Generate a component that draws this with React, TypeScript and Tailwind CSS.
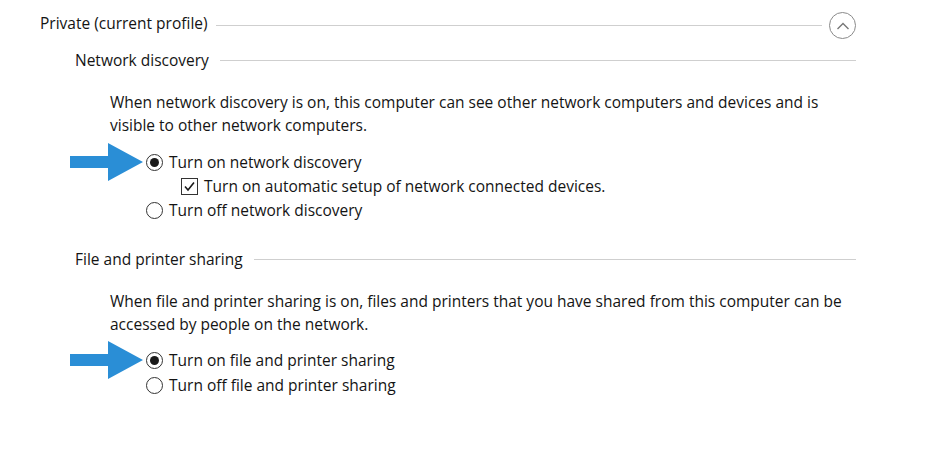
const font = { fontFamily: '"Open Sans", "Noto Sans", sans-serif' }

function Arrow() {
  return (
    <svg width="74" height="38" viewBox="0 0 74 38" className="shrink-0">
      <path d="M0 13 H38 V0 L73 19 L38 38 V25 H0 Z" fill="#2a8ed6" />
    </svg>
  )
}

function Radio({ checked }: { checked?: boolean }) {
  return (
    <span className="w-[17px] h-[17px] rounded-full border-[1.5px] border-[#333] flex items-center justify-center shrink-0 bg-white">
      {checked && <span className="w-[9px] h-[9px] rounded-full bg-[#1a1a1a]" />}
    </span>
  )
}

function Check() {
  return (
    <span className="w-[17px] h-[17px] border-[1.5px] border-[#333] flex items-center justify-center shrink-0 bg-white">
      <svg width="13" height="13" viewBox="0 0 13 13">
        <path d="M2 6.5 L5 10 L11 2.5" stroke="#1a1a1a" strokeWidth="1.6" fill="none" />
      </svg>
    </span>
  )
}

function Heading({ label }: { label: string }) {
  return (
    <div className="flex items-center pl-[75px] pr-[96px]">
      <span className="whitespace-nowrap">{label}</span>
      <div className="flex-1 h-px bg-[#cfcfcf] ml-[11px]" />
    </div>
  )
}

function Option({ checked, label, arrow }: { checked?: boolean; label: string; arrow?: boolean }) {
  return (
    <div className="flex items-center h-[24px] relative">
      {arrow && (
        <div className="absolute left-[-76px] top-[-7px]">
          <Arrow />
        </div>
      )}
      <Radio checked={checked} />
      <span className="ml-[6px] whitespace-nowrap">{label}</span>
    </div>
  )
}

export default function App() {
  return (
    <div className="w-[952px] h-[457px] bg-white text-[#141414] text-[15.5px] leading-[23px] overflow-hidden" style={font}>
      <div className="pt-[12px]">
        <div className="flex items-center pl-[40px] pr-[96px]">
          <span className="whitespace-nowrap mb-[4px]">Private (current profile)</span>
          <div className="flex-1 h-px bg-[#cfcfcf] ml-[8px]" />
          <span className="w-[27px] h-[27px] rounded-full border border-[#8a8a8a] flex items-center justify-center ml-[7px] shrink-0">
            <svg width="14" height="10" viewBox="0 0 14 10">
              <path d="M1.5 8 L7 2.5 L12.5 8" stroke="#777" strokeWidth="1.4" fill="none" />
            </svg>
          </span>
        </div>

        <div className="mt-[10px]">
          <Heading label="Network discovery" />
        </div>

        <div className="pl-[110px] pr-[102px] mt-[19px]">
          <p>When network discovery is on, this computer can see other network computers and devices and is visible to other network computers.</p>
        </div>

        <div className="pl-[146px] mt-[13px]">
          <Option checked label="Turn on network discovery" arrow />
          <div className="flex items-center h-[24px] pl-[35px]">
            <Check />
            <span className="ml-[6px] whitespace-nowrap">Turn on automatic setup of network connected devices.</span>
          </div>
          <Option label="Turn off network discovery" />
        </div>

        <div className="mt-[26px]">
          <Heading label="File and printer sharing" />
        </div>

        <div className="pl-[110px] pr-[102px] mt-[19px]">
          <p>When file and printer sharing is on, files and printers that you have shared from this computer can be accessed by people on the network.</p>
        </div>

        <div className="pl-[146px] mt-[12px]">
          <Option checked label="Turn on file and printer sharing" arrow />
          <div className="mt-[1px]">
            <Option label="Turn off file and printer sharing" />
          </div>
        </div>
      </div>
    </div>
  )
}
